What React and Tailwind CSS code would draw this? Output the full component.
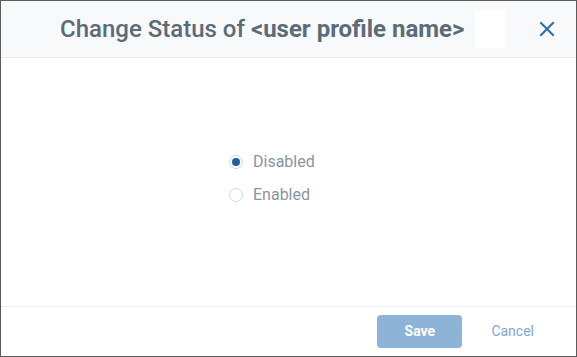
import React, { useState } from 'react';

export default function App() {
  const [status, setStatus] = useState('disabled');

  const options = [
    { value: 'disabled', label: 'Disabled' },
    { value: 'enabled', label: 'Enabled' },
  ];

  return (
    <div
      className="w-[577px] h-[357px] border border-[#5b5b5b] bg-white flex flex-col overflow-hidden"
      style={{ fontFamily: 'Roboto, "Liberation Sans", sans-serif' }}
    >
      {/* Header */}
      <div className="h-[57px] shrink-0 bg-[#f7f9fb] border-b border-[#e9edf0] flex items-center pl-[59px] pr-[21px]">
        <h2 className="text-[24px] leading-none text-[#5b6b78] font-medium">
          Change Status of <span className="font-bold">&lt;user profile name&gt;</span>
        </h2>
        <div className="ml-[11px] w-[30px] h-[38px] bg-white"></div>
        <button className="ml-auto text-[#2b6ea3]">
          <svg width="16" height="16" viewBox="0 0 16 16" fill="none" stroke="currentColor" strokeWidth="2" strokeLinecap="square">
            <path d="M2 2 L14 14 M14 2 L2 14" />
          </svg>
        </button>
      </div>

      {/* Body */}
      <div className="flex-1 flex flex-col pt-[94px] pl-[228px]">
        <div className="flex flex-col gap-[13px]">
          {options.map(opt => (
            <label key={opt.value} className="flex items-center gap-[10px] cursor-pointer h-[20px]">
              <span
                onClick={() => setStatus(opt.value)}
                className="w-[14px] h-[14px] rounded-full border border-[#d3d8dc] bg-white flex items-center justify-center"
              >
                {status === opt.value && <span className="w-[8px] h-[8px] rounded-full bg-[#1f5f9e]"></span>}
              </span>
              <span className="text-[16px] text-[#8a959f]">{opt.label}</span>
            </label>
          ))}
        </div>
      </div>

      {/* Footer */}
      <div className="h-[50px] shrink-0 border-t border-[#eceff1] flex items-center justify-end pr-[42px]">
        <button className="w-[85px] h-[33px] rounded-[4px] bg-[#8db4d7] text-white text-[14px] font-bold">
          Save
        </button>
        <button className="ml-[29px] text-[14px] text-[#7fa8cb]">Cancel</button>
      </div>
    </div>
  );
}
